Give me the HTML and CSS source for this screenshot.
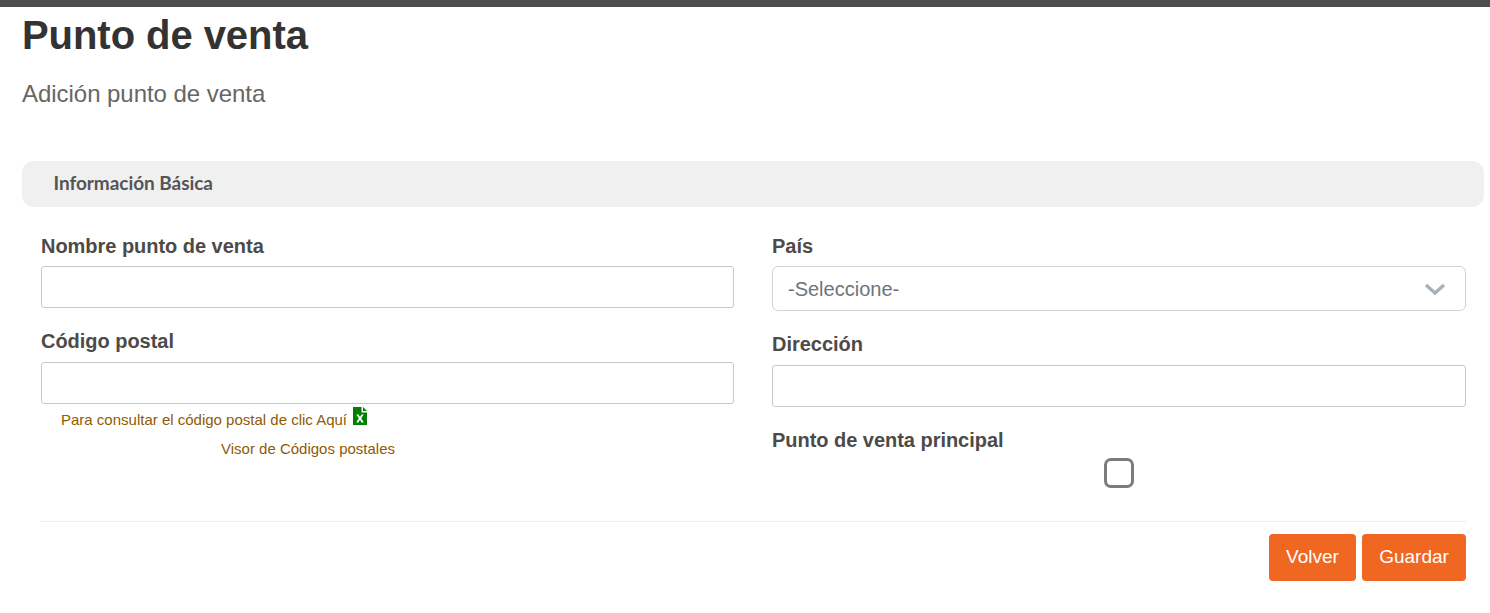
FILE: index.html
```html
<!DOCTYPE html>
<html lang="es">
<head>
<meta charset="utf-8">
<title>Punto de venta</title>
<link rel="stylesheet" href="styles.css">
</head>
<body>
<div class="topbar"></div>
<main class="page">
  <h1 class="title">Punto de venta</h1>
  <p class="subtitle">Adición punto de venta</p>
  <section class="panel">
    <h2 class="panel-head">Información Básica</h2>
    <form class="form">
      <div class="columns">
        <div class="column">
          <div class="field field-first">
            <label class="label">Nombre punto de venta</label>
            <input class="input" type="text">
          </div>
          <div class="field field-postal">
            <label class="label">Código postal</label>
            <input class="input" type="text">
          </div>
          <div class="help-row">
            <a class="help">Para consultar el código postal de clic Aquí</a>
            <svg class="xls" viewBox="0 0 14 18" width="14" height="18" aria-hidden="true">
              <path fill="#008000" d="M0 0h8.500v5.500H14V18H0z"/>
              <path fill="#008000" d="M10 0l4 4h-4z"/>
              <path fill="#fff" d="M3.200 7.400h2.300l1.500 2.600 1.500-2.600h2.200L8.200 11.200l2.600 4.200H8.500L7 12.700 5.400 15.400H3.200l2.700-4.200z"/>
            </svg>
          </div>
          <div class="viewer-row"><a class="help">Visor de Códigos postales</a></div>
        </div>
        <div class="column">
          <div class="field field-first">
            <label class="label">País</label>
            <div class="select">
              <span class="select-text">-Seleccione-</span>
              <svg class="chevron" viewBox="0 0 22 14" width="22" height="14" aria-hidden="true">
                <path d="M2 3l9 8 9-8" fill="none" stroke="#a9b1b8" stroke-width="3.400"/>
              </svg>
            </div>
          </div>
          <div class="field field-address">
            <label class="label">Dirección</label>
            <input class="input" type="text">
          </div>
          <div class="field field-main">
            <label class="label">Punto de venta principal</label>
            <div class="check-wrap"><span class="check"></span></div>
          </div>
        </div>
      </div>
      <div class="actions">
        <button class="btn btn-back" type="button">Volver</button>
        <button class="btn btn-save" type="button">Guardar</button>
      </div>
    </form>
  </section>
</main>
</body>
</html>
```
FILE: styles.css
```css
* { box-sizing: border-box; }
html, body { margin: 0; padding: 0; }
body {
  background: #fff;
  font-family: "Liberation Sans", Arial, sans-serif;
  color: #4d4a48;
  overflow: hidden;
}
.topbar { height: 7px; background: #4d4d4d; }
.page { padding: 0 6px 0 22px; }
.title {
  margin: 0;
  height: 56px;
  font-size: 40px;
  line-height: 56px;
  font-weight: 700;
  letter-spacing: -0.06px;
  color: #333;
}
.subtitle {
  margin: 16px 0 0;
  height: 30px;
  font-size: 24px;
  line-height: 30px;
  letter-spacing: -0.04px;
  color: #666;
}
.panel { margin-top: 52px; }
.panel-head {
  margin: 0;
  height: 46px;
  padding-left: 31.5px;
  background: #f0f0f0;
  border-radius: 12px;
  font-family: Lato, sans-serif;
  font-size: 19px;
  line-height: 44px;
  font-weight: 700;
  letter-spacing: -0.05px;
  color: #555;
}
.form { padding: 0 18px 0 19px; }
.columns {
  display: grid;
  grid-template-columns: 693px 694px;
  column-gap: 38px;
  height: 315px;
  border-bottom: 1px solid #eee;
}
.column { display: flex; flex-direction: column; }
.field { display: flex; flex-direction: column; }
.field-first { padding-top: 26px; }
.field-postal { padding-top: 20px; }
.field-address { padding-top: 20px; }
.field-main { padding-top: 20px; }
.label {
  display: block;
  height: 26px;
  font-size: 20px;
  line-height: 26px;
  font-weight: 700;
  letter-spacing: -0.03px;
  color: #4d4a48;
  margin-bottom: 7px;
}
.field-postal .label, .field-address .label { margin-bottom: 8px; }
.field-main .label { margin-bottom: 5px; }
.input {
  display: block;
  width: 100%;
  height: 42px;
  border: 1px solid #c8c8c8;
  border-radius: 3px;
  background: #fff;
  padding: 0 15px;
}
.select {
  display: flex;
  align-items: center;
  justify-content: space-between;
  height: 45px;
  padding: 0 19px 0 15px;
  border: 1px solid #ced4da;
  border-radius: 6px;
  font-size: 20px;
  color: #6c757d;
}
.select-text { padding-top: 2px; }
.help-row {
  display: flex;
  align-items: flex-start;
  padding: 3px 0 0 20px;
  height: 29px;
}
.help {
  font-size: 15px;
  line-height: 20px;
  color: #8f5a05;
}
.help-row .help { margin-top: 3px; }
.xls { margin-left: 6px; }
.viewer-row { padding-left: 180px; height: 20px; margin-top: 6px; }
.check-wrap { display: flex; justify-content: center; }
.check {
  display: block;
  width: 30px;
  height: 30px;
  border: 3px solid #7b7b7b;
  border-radius: 7px;
  background: #fff;
}
.actions {
  display: flex;
  justify-content: flex-end;
  gap: 6px;
  padding-top: 12px;
}
.btn {
  height: 47px;
  border: 0;
  border-radius: 4px;
  padding: 0 0 2px;
  background: #f06722;
  color: #fff;
  font-family: "Liberation Sans", Arial, sans-serif;
  font-size: 19px;
}
.btn-back { width: 87px; }
.btn-save { width: 104px; }
```
